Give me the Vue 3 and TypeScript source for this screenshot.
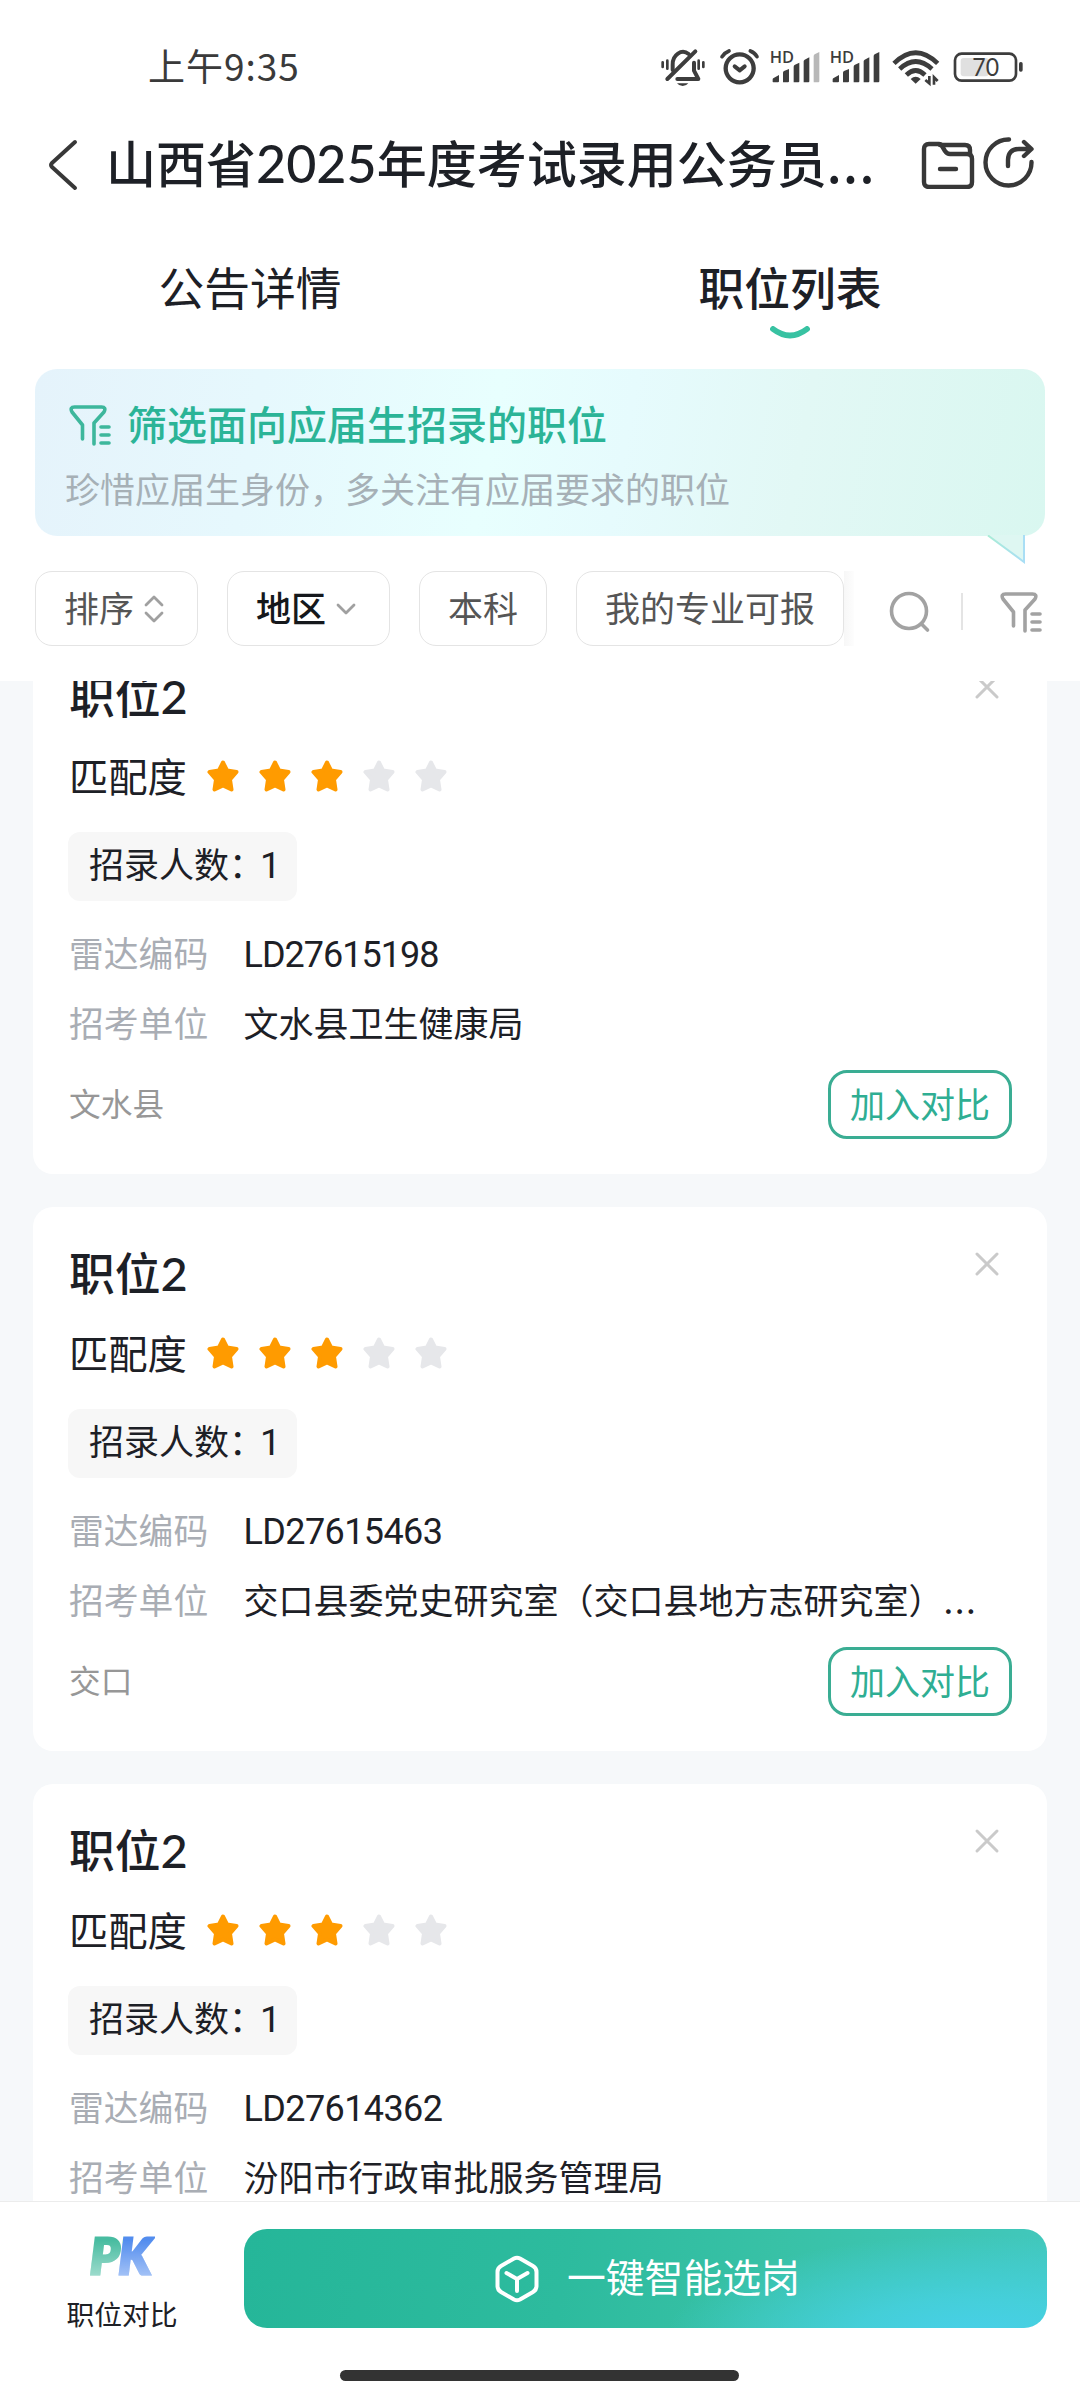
<script setup lang="ts">
interface Job {
  title: string
  stars: number
  count: number
  code: string
  unit: string
  more?: boolean
  area: string
}

const jobs: Job[] = [
  { title: '职位', stars: 3, count: 1, code: 'LD27615198', unit: '文水县卫生健康局', area: '文水县' },
  { title: '职位', stars: 3, count: 1, code: 'LD27615463', unit: '交口县委党史研究室（交口县地方志研究室）', more: true, area: '交口' },
  { title: '职位', stars: 3, count: 1, code: 'LD27614362', unit: '汾阳市行政审批服务管理局', area: '汾阳市' },
]

const codeTracking = (code: string): string => {
  const ones = code.split('1').length - 1
  return `${-0.2 - ones * 0.4}px`
}
</script>

<template>
  <div class="screen">
    <div class="status">
      <span class="time">上午9:35</span>
      <svg class="status-icons" viewBox="0 0 1200 240" width="400" height="80">
        <g fill="none" stroke="#3d3d3d" stroke-width="12" stroke-linecap="round" stroke-linejoin="round">
          <path d="M98 120V104a31 37 0 0 1 48-32" />
          <path d="M82 147L166 64" />
          <path d="M112 147H175L162 122V98" />
          <path d="M68 97v14M82 92v24M176 92v24M190 97v14" stroke-width="8" />
          <circle cx="299" cy="115" r="42" stroke-width="13" />
          <path d="M284 109L299 121L314 109" stroke-width="12" />
          <path d="M246 80Q254 68 267 63M331 63Q344 68 351 80" stroke-width="11" />
        </g>
        <path d="M111 160H145Q139 168 128 168T111 160Z" fill="#3d3d3d" />
        <g fill="#3d3d3d">
          <path v-for="o in [0, 180]" :key="o" :transform="`translate(${o} 0)`"
            d="M398 156V148Q398 145 401 144L417 135V154Q417 157 414 157H400ZM429 157V128Q429 125 432 123L447 117V154Q447 157 444 157ZM461 157V110Q461 106 465 104L478 98V154Q478 157 475 157ZM491 157V94Q491 91 494 89L508 82V154Q508 157 505 157Z" />
          <path d="M521 157V78Q521 75 524 73L538 66V154Q538 157 535 157Z" fill="#b8b8b8" />
          <path d="M701 157V78Q701 75 704 73L718 66V154Q718 157 715 157Z" />
        </g>
        <g class="glyphs" fill="#3d3d3d">
          <text x="389" y="98" textLength="73" lengthAdjust="spacingAndGlyphs">HD</text>
          <text x="569" y="98" textLength="73" lengthAdjust="spacingAndGlyphs">HD</text>
        </g>
        <g fill="none" stroke="#3d3d3d" stroke-width="14">
          <path d="M762 100Q827 36 893 100" />
          <path d="M779 117Q827 72 876 117" />
          <path d="M799 135Q827 108 855 135" />
        </g>
        <path d="M827 161L812 147Q827 134 842 147Z" fill="#3d3d3d" />
        <path d="M868 138V160L856 150M882 164V142L893 153" fill="none" stroke="#3d3d3d" stroke-width="8" />
        <rect x="945" y="71" width="183" height="81" rx="20" fill="none" stroke="#3d3d3d" stroke-width="8" />
        <rect x="962" y="84" width="84" height="55" rx="9" fill="#e0e0e0" />
        <rect x="1137" y="96" width="11" height="29" rx="5" fill="#3d3d3d" />
        <text class="level" x="997" y="137" textLength="80" lengthAdjust="spacingAndGlyphs" fill="#3d3d3d">70</text>
      </svg>
    </div>

    <div class="nav">
      <svg class="back" viewBox="0 0 34 56" width="34" height="56" fill="none" stroke="#383838" stroke-width="4" stroke-linecap="round" stroke-linejoin="round">
        <path d="M29 5L6 26Q4 28 6 30L29 51" />
      </svg>
      <h1 class="nav-title">山西省<span class="num">2025</span>年度考试录用公务员<span class="dots">...</span></h1>
      <svg class="folder" viewBox="0 0 54 48" width="54" height="48" fill="none" stroke="#383838" stroke-width="4.400" stroke-linecap="round" stroke-linejoin="round">
        <path d="M3 8Q3 3 8 3H18Q20 3 21 5L24 10Q26 13 29 13H46Q51 13 51 18V41Q51 46 46 46H8Q3 46 3 41Z" />
        <path d="M19 4H44Q49 4 49 9V13M19 28H35" />
      </svg>
      <svg class="share" viewBox="0 0 52 52" width="52" height="52" fill="none" stroke="#383838" stroke-width="4.400" stroke-linecap="round" stroke-linejoin="round">
        <path d="M27 3.5A23 23 0 1 0 49.5 26" />
        <path d="M26 30V24Q26 13 37 13H48M42 6L49.5 13L42 20" />
      </svg>
    </div>

    <div class="tabs">
      <div class="tab">公告详情</div>
      <div class="tab active">
        职位列表
        <svg class="smile" viewBox="0 0 40 13" width="40" height="13" fill="none" stroke="#38c2a2" stroke-width="5.800" stroke-linecap="round">
          <path d="M3 3Q20 16 37 3" />
        </svg>
      </div>
    </div>

    <div class="banner">
      <div class="banner-head">
        <svg viewBox="0 0 42 42" width="42" height="42" fill="none" stroke="#3db79c" stroke-width="3.600" stroke-linecap="round" stroke-linejoin="round">
          <path d="M13.500 35V21L3 8Q0.500 3 5.500 3H32.500Q37.500 3 35 8L25 19V40M32 23H40M32 31H40M32 39H40" />
        </svg>
        <span>筛选面向应届生招录的职位</span>
      </div>
      <p class="banner-sub">珍惜应届生身份，多关注有应届要求的职位</p>
      <svg class="tail" viewBox="0 0 40 29" width="40" height="29">
        <defs>
          <linearGradient id="edge" x1="0" y1="0" x2="1" y2="0">
            <stop offset="0" stop-color="#a9ecd6" />
            <stop offset="1" stop-color="#a9def5" />
          </linearGradient>
        </defs>
        <path d="M1 0L37 27V0Z" fill="#def7f2" />
        <path d="M1 0.500L37 27V0" fill="none" stroke="url(#edge)" stroke-width="2" />
      </svg>
    </div>

    <div class="filters">
      <div class="chip"><span>排序</span>
        <svg class="sort" viewBox="0 0 20 28" width="20" height="28" fill="none" stroke="#a0a0a0" stroke-width="2.800" stroke-linecap="round" stroke-linejoin="round">
          <path d="M2 10L10 2L18 10M2 18L10 26L18 18" />
        </svg>
      </div>
      <div class="chip picked"><span>地区</span>
        <svg class="sort" viewBox="0 0 20 12" width="20" height="12" fill="none" stroke="#a0a0a0" stroke-width="2.800" stroke-linecap="round" stroke-linejoin="round">
          <path d="M2 2L10 10L18 2" />
        </svg>
      </div>
      <div class="chip"><span>本科</span></div>
      <div class="chip"><span>我的专业可报</span></div>
      <div class="fade"></div>
      <svg class="search" viewBox="0 0 42 42" width="42" height="42" fill="none" stroke="#a2a2a2" stroke-width="3.600" stroke-linecap="round">
        <circle cx="20" cy="20" r="17.500" />
        <path d="M32.500 33L38.500 39" />
      </svg>
      <div class="rule"></div>
      <svg class="funnel" viewBox="0 0 42 42" width="42" height="42" fill="none" stroke="#a2a2a2" stroke-width="3.600" stroke-linecap="round" stroke-linejoin="round">
        <path d="M13.500 35V21L3 8Q0.500 3 5.500 3H32.500Q37.500 3 35 8L25 19V40M32 23H40M32 31H40M32 39H40" />
      </svg>
    </div>

    <div class="list">
      <div class="cards">
        <article v-for="job in jobs" :key="job.code" class="card">
          <header class="card-head">
            <h2>{{ job.title }}<span class="num">2</span></h2>
            <svg viewBox="0 0 26 26" width="26" height="26" fill="none" stroke="#cacaca" stroke-width="3" stroke-linecap="round">
              <path d="M3 3L23 23M23 3L3 23" />
            </svg>
          </header>
          <div class="match">
            <span class="match-label">匹配度</span>
            <svg v-for="n in 5" :key="n" class="star" :class="{ on: n <= job.stars }" viewBox="0 0 32 32" width="32" height="32">
              <path d="M16 2.500L20 10.500L29.500 12L23 19.500L24.500 29.500L16 25.500L7.500 29.500L9 19.500L2.500 12L12 10.500Z" />
            </svg>
          </div>
          <div class="tag">招录人数：<span class="one">{{ job.count }}</span></div>
          <div class="row code-row">
            <span class="key">雷达编码</span>
            <span class="code" :style="{ letterSpacing: codeTracking(job.code) }">{{ job.code }}</span>
          </div>
          <div class="row">
            <span class="key">招考单位</span>
            <span class="unit">{{ job.unit }}<span v-if="job.more" class="dots">...</span></span>
          </div>
          <footer class="card-foot">
            <span class="area">{{ job.area }}</span>
            <button class="compare">加入对比</button>
          </footer>
        </article>
      </div>
    </div>

    <div class="dock">
      <div class="dock-row">
        <div class="pk">
          <span class="pk-mark">PK</span>
          <span class="pk-label">职位对比</span>
        </div>
        <button class="smart">
          <svg viewBox="0 0 44 48" width="44" height="48" fill="none" stroke="#fff" stroke-width="4" stroke-linecap="round" stroke-linejoin="round">
            <path d="M19 3.500Q22 2 25 3.500L38 11Q41.500 13 41.500 17V31Q41.500 35 38 37L25 44.500Q22 46 19 44.500L6 37Q2.500 35 2.500 31V17Q2.500 13 6 11Z" />
            <path d="M11.500 18L22 24L32.500 18M22 24V36" />
          </svg>
          <span>一键智能选岗</span>
        </button>
      </div>
      <div class="home"></div>
    </div>
  </div>
</template>

<style>
body {
  margin: 0;
  background: #fff;
}
</style>

<style scoped>
.screen {
  width: 1080px;
  height: 2400px;
  display: flex;
  flex-direction: column;
  overflow: hidden;
  background: #fff;
  color: #1d2026;
  font-family: "Noto Sans CJK SC", "Noto Sans", sans-serif;
}
h1, h2, p {
  margin: 0;
  white-space: nowrap;
}
button {
  font-family: inherit;
  padding: 0;
  box-sizing: border-box;
}
svg {
  display: block;
  flex: none;
}
.num {
  font-family: Lato, "Noto Sans", sans-serif;
  font-weight: 500;
}
.dots {
  letter-spacing: 1.500px;
}
.status {
  height: 110px;
  flex: none;
  display: flex;
  align-items: flex-start;
  justify-content: space-between;
  padding: 30px 40px 0 148px;
  box-sizing: border-box;
}
.time {
  font-size: 37px;
  line-height: 70px;
  color: #3a3a3a;
  letter-spacing: 1px;
}
.glyphs {
  font-family: "Open Sans", "Noto Sans", sans-serif;
  font-weight: 600;
  font-size: 48px;
}
.level {
  font-family: Lato, sans-serif;
  font-size: 74px;
}
.nav {
  height: 110px;
  flex: none;
  display: flex;
  align-items: center;
  padding-left: 46px;
}
.nav-title {
  width: 800px;
  margin-left: 26px;
  margin-bottom: 6px;
  font-size: 50px;
  line-height: 60px;
  font-weight: 500;
}
.nav-title .num {
  font-size: 52px;
}
.folder {
  margin-left: 15px;
}
.share {
  margin-left: 7px;
  margin-bottom: 6px;
}
.tabs {
  height: 149px;
  flex: none;
  display: flex;
}
.tab {
  width: 540px;
  box-sizing: border-box;
  padding: 36px 40px 0 0;
  text-align: center;
  font-size: 45.800px;
  line-height: 60px;
}
.tab.active {
  font-weight: 500;
}
.smile {
  margin: 10px auto 0;
}
.banner {
  position: relative;
  height: 167px;
  flex: none;
  margin: 0 35px;
  padding: 33px 30px 0;
  box-sizing: border-box;
  border-radius: 22px;
  background: linear-gradient(100deg, #e5f3fb 0%, #e6f8fd 22%, #e8fffe 45%, #e6fbfd 58%, #e2f8f5 75%, #d9f7f0 100%);
}
.banner-head {
  display: flex;
  align-items: center;
  height: 42px;
  padding-left: 4px;
  gap: 16px;
  font-size: 40px;
  line-height: 42px;
  font-weight: 500;
  color: #2bb497;
  white-space: nowrap;
}
.banner-head svg {
  margin-top: 3px;
}
.banner-sub {
  margin-top: 23px;
  font-size: 35px;
  line-height: 42px;
  color: #a6b0b6;
}
.tail {
  position: absolute;
  right: 18px;
  top: 166px;
}
.filters {
  height: 145px;
  flex: none;
  display: flex;
  align-items: flex-start;
  padding: 35px 0 0 35px;
  box-sizing: border-box;
}
.chip {
  display: flex;
  align-items: center;
  height: 75px;
  margin-right: 29px;
  padding: 0 28px;
  box-sizing: border-box;
  border: 1px solid #e4e4e4;
  border-radius: 17px;
  font-size: 35px;
  line-height: 52px;
  color: #555;
  white-space: nowrap;
}
.chip span {
  padding-bottom: 4px;
}
.picked {
  color: #15181c;
  font-weight: 500;
}
.sort {
  margin: 0 5px 0 10px;
}
.fade {
  width: 10px;
  height: 75px;
  margin-left: -29px;
  background: linear-gradient(90deg, #f7f7f7, #fdfdfd);
}
.search {
  margin: 20px 0 0 35px;
}
.rule {
  width: 2px;
  height: 37px;
  margin: 22px 0 0 30px;
  background: #e4e4e4;
}
.funnel {
  margin: 20px 0 0 37px;
}
.list {
  height: 1520px;
  flex: none;
  overflow: hidden;
  background: #f6f8fa;
}
.cards {
  margin-top: -51px;
  display: flex;
  flex-direction: column;
  gap: 33px;
  padding: 0 33px;
}
.card {
  height: 544px;
  flex: none;
  padding: 0 35px 0 36px;
  box-sizing: border-box;
  border-radius: 20px;
  background: #fff;
}
.card-head {
  display: flex;
  justify-content: space-between;
  padding: 34px 12px 0 0;
  height: 103px;
  box-sizing: border-box;
}
.card-head h2 {
  font-size: 45.800px;
  line-height: 60px;
  font-weight: 500;
}
.card-head .num {
  font-size: 47px;
}
.card-head svg {
  margin-top: 10px;
}
.match {
  display: flex;
  align-items: center;
  height: 86px;
}
.match-label {
  width: 119px;
  margin-right: 19px;
  padding-bottom: 3px;
  font-size: 39.300px;
  line-height: 60px;
}
.star {
  margin-right: 20px;
  fill: #e6e7ea;
  stroke: #e6e7ea;
  stroke-width: 4px;
  stroke-linejoin: round;
}
.star.on {
  fill: #ff9b00;
  stroke: #ff9b00;
}
.tag {
  width: 229px;
  height: 69px;
  margin: 13px 0 0 -1px;
  padding-left: 21px;
  box-sizing: border-box;
  border-radius: 12px;
  background: #f7f7f7;
  font-size: 35px;
  line-height: 62px;
  white-space: nowrap;
}
.one {
  margin-left: -4px;
  font-family: Roboto, sans-serif;
  font-size: 37px;
  line-height: 1;
}
.row {
  display: flex;
  height: 70px;
  font-size: 35px;
  line-height: 70px;
  white-space: nowrap;
}
.code-row {
  margin-top: 16px;
}
.key {
  width: 174.500px;
  flex: none;
  font-size: 34.800px;
  color: #a9adb4;
}
.code {
  padding-top: 3px;
  font-family: Roboto, sans-serif;
  font-size: 36px;
}
.card-foot {
  display: flex;
  align-items: center;
  justify-content: space-between;
  height: 69px;
  margin-top: 13px;
}
.area {
  padding-bottom: 5px;
  font-size: 31.700px;
  line-height: 60px;
  color: #979797;
}
.compare {
  width: 184px;
  height: 69px;
  padding-bottom: 4px;
  border: 3px solid #3aad93;
  border-radius: 19px;
  background: #fff;
  color: #2fae93;
  font-size: 35px;
  line-height: 58px;
}
.dock {
  flex: 1;
  border-top: 1px solid #ececec;
  background: #fff;
}
.dock-row {
  display: flex;
  height: 168px;
  padding: 27px 33px 0 0;
  box-sizing: border-box;
}
.pk {
  width: 244px;
  flex: none;
  display: flex;
  flex-direction: column;
  align-items: center;
}
.pk-mark {
  height: 56px;
  margin: 0 0 3px -4px;
  padding: 0 5px;
  font-family: Lato, sans-serif;
  font-weight: 900;
  font-style: italic;
  font-size: 50px;
  line-height: 52px;
  letter-spacing: -1px;
  white-space: nowrap;
  color: transparent;
  -webkit-text-stroke: 3px transparent;
  background-image:
    linear-gradient(180deg, rgba(255, 255, 255, 0.050) 20%, rgba(255, 255, 255, 0.500) 85%),
    linear-gradient(100deg, #3fb99c 50%, #4a87ee 50%);
  -webkit-background-clip: text;
  background-clip: text;
}
.pk-label {
  font-size: 27.800px;
  line-height: 50px;
}
.smart {
  width: 803px;
  height: 99px;
  border: 0;
  border-radius: 23px;
  background:
    radial-gradient(ellipse 310px 105px at 91% 112%, #48d0ea 0%, rgba(70, 209, 226, 0.800) 40%, rgba(66, 205, 200, 0) 100%),
    linear-gradient(100deg, #25b699 0%, #2dbb9e 40%, #38c1a6 65%, #42c8bd 100%);
  color: #fff;
  display: flex;
  align-items: center;
  padding-left: 251px;
  gap: 28px;
  font-size: 38.800px;
  line-height: 60px;
  white-space: nowrap;
}
.smart span {
  padding-bottom: 7px;
}
.home {
  width: 399px;
  height: 11px;
  margin-left: 340px;
  border-radius: 6px;
  background: #333;
}
</style>
